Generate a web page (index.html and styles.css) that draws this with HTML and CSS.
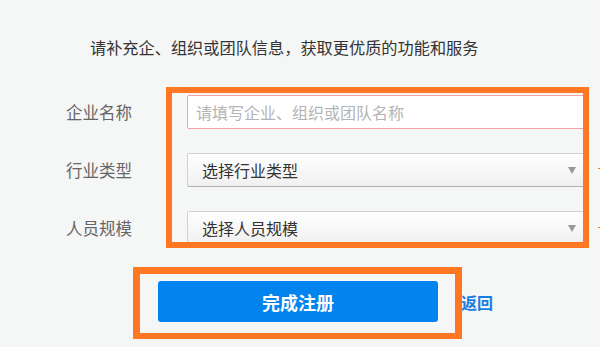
FILE: index.html
```html
<!DOCTYPE html>
<html lang="zh-CN">
<head>
<meta charset="utf-8">
<link rel="stylesheet" href="styles.css">
</head>
<body>
<div class="page">
  <p class="intro">请补充企、组织或团队信息，获取更优质的功能和服务</p>
  <div class="form">
    <label class="label">企业名称</label>
    <div class="field input error"><span class="placeholder">请填写企业、组织或团队名称</span></div>
    <label class="label">行业类型</label>
    <div class="field select"><span>选择行业类型</span><i class="arrow"></i></div>
    <label class="label">人员规模</label>
    <div class="field select"><span>选择人员规模</span><i class="arrow"></i></div>
  </div>
  <div class="actions">
    <button class="submit">完成注册</button>
    <a class="back">返回</a>
  </div>
  <div class="mark mark-form"></div>
  <div class="mark mark-btn"></div>
  <div class="tick tick-1"></div>
  <div class="tick tick-2"></div>
</div>
</body>
</html>
```
FILE: styles.css
```css
html, body {
  margin: 0;
  padding: 0;
  background: #f5f6f6;
  font-family: "Noto Sans CJK SC", "Noto Sans", sans-serif;
}
.page {
  position: relative;
  width: 600px;
  height: 347px;
  overflow: hidden;
}
.intro {
  margin: 0;
  padding: 35px 0 0 90px;
  font-size: 16.2px;
  line-height: 24px;
  color: #333;
}
.form {
  display: grid;
  grid-template-columns: 121px 401px;
  grid-auto-rows: 34px;
  row-gap: 24px;
  padding: 36px 0 0 66px;
}
.label {
  font-size: 16.5px;
  color: #666;
  display: flex;
  align-items: center;
}
.field {
  box-sizing: border-box;
  height: 34px;
  display: flex;
  align-items: center;
  padding: 0 10px 0 8px;
  font-size: 16px;
  border-radius: 2px;
}
.input {
  background: #fff;
  border: 1px solid #f3a3a3;
}
.placeholder {
  color: #b4b4b4;
}
.select {
  background: linear-gradient(#ffffff, #f0f0f0);
  border: 1px solid #cfcfcf;
  border-bottom-color: #b0b0b0;
  color: #333;
  justify-content: space-between;
  padding-left: 14px;
}
.arrow {
  width: 0;
  height: 0;
  border-left: 4px solid transparent;
  border-right: 4px solid transparent;
  border-top: 7px solid #999;
  margin-right: 1px;
}
.actions {
  display: flex;
  align-items: center;
  padding: 36px 0 0 158px;
}
.submit {
  width: 280px;
  height: 41px;
  border: none;
  border-radius: 3px;
  background: #0283ee;
  color: #fff;
  font-family: inherit;
  font-size: 18px;
  font-weight: bold;
  padding: 0;
}
.back {
  margin-left: 23px;
  font-size: 16px;
  font-weight: bold;
  color: #1b7fe2;
}
.mark {
  position: absolute;
  border: 6px solid #ff7722;
  box-sizing: border-box;
}
.mark-form {
  left: 166px;
  top: 87px;
  width: 423px;
  height: 161px;
}
.mark-btn {
  left: 133px;
  top: 267px;
  width: 329px;
  height: 72px;
  border-width: 7px 7px 6px 7px;
}
.tick {
  position: absolute;
  left: 598px;
  width: 2px;
  height: 1px;
  background: #ff7722;
}
.tick-1 { top: 168px; }
.tick-2 { top: 227px; }
```
